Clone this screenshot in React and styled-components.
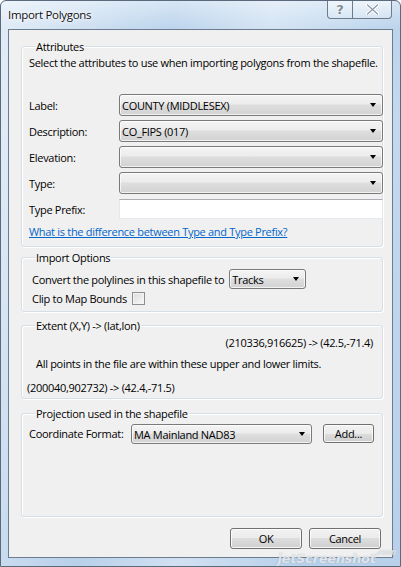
import React, { useState } from "react";
import styled, { createGlobalStyle } from "styled-components";

const Global = createGlobalStyle`
  html, body { margin: 0; padding: 0; background: #ffffff; }
  body {
    font-family: "Open Sans", "Noto Sans", sans-serif;
    font-size: 11px;
    letter-spacing: -0.3px;
    color: #000;
  }
  * { box-sizing: border-box; }
`;

const Combo = ({ value, width }) => (
  <ComboBox $width={width}>
    <ComboText>{value}</ComboText>
    <Arrow />
  </ComboBox>
);

const App = () => {
  const [clip, setClip] = useState(false);

  return (
    <>
      <Global />
      <Window>
        <TitleBar>
          <Title>Import Polygons</Title>
          <Caption>
            <CapButton $w={26}>?</CapButton>
            <CapButton $w={40}>
              <svg width="13" height="11" viewBox="0 0 13 11">
                <path d="M1.5 1 L11.5 10 M11.5 1 L1.5 10" stroke="#fff" strokeWidth="3.2" strokeLinecap="round" />
                <path d="M1.5 1 L11.5 10 M11.5 1 L1.5 10" stroke="#8c98a6" strokeWidth="1.2" strokeLinecap="round" />
              </svg>
            </CapButton>
          </Caption>
        </TitleBar>

        <Client>
          <Group>
            <Legend>Attributes</Legend>
            <Note>Select the attributes to use when importing polygons from the shapefile.</Note>
            <Form>
              <FieldLabel>Label:</FieldLabel>
              <Combo value="COUNTY (MIDDLESEX)" />
              <FieldLabel>Description:</FieldLabel>
              <Combo value="CO_FIPS (017)" />
              <FieldLabel>Elevation:</FieldLabel>
              <Combo value="" />
              <FieldLabel>Type:</FieldLabel>
              <Combo value="" />
              <FieldLabel $input>Type Prefix:</FieldLabel>
              <TextInput />
            </Form>
            <HelpLink href="#">What is the difference between Type and Type Prefix?</HelpLink>
          </Group>

          <Group $mt={3} $pb={5}>
            <Legend>Import Options</Legend>
            <OptionRow $top={4}>
              Convert the polylines in this shapefile to
              <Combo value="Tracks" width={77} />
            </OptionRow>
            <OptionRow $top={2}>
              Clip to Map Bounds
              <Check $on={clip} onClick={() => setClip(!clip)} />
            </OptionRow>
          </Group>

          <Group $mt={6} $pb={3}>
            <Legend>Extent (X,Y) -&gt; (lat,lon)</Legend>
            <ExtentLine $align="right" $top={2}>(210336,916625) -&gt; (42.5,-71.4)</ExtentLine>
            <ExtentLine $indent={7} $top={6}>All points in the file are within these upper and lower limits.</ExtentLine>
            <ExtentLine $indent={-2} $top={9}>(200040,902732) -&gt; (42.4,-71.5)</ExtentLine>
          </Group>

          <Group $mt={7} $grow>
            <Legend>Projection used in the shapefile</Legend>
            <ProjRow>
              <ProjLabel>Coordinate Format:</ProjLabel>
              <Combo value="MA Mainland NAD83" width={181} />
              <Button $w={51} $h={19}>Add...</Button>
            </ProjRow>
          </Group>

          <ButtonBar>
            <Button $w={72}>OK</Button>
            <Button $w={72}>Cancel</Button>
          </ButtonBar>
        </Client>

        <Watermark>
          jetScreenshot<small>.com</small>
        </Watermark>
      </Window>
    </>
  );
};

export default App;

const Window = styled.div`
  position: relative;
  width: 401px;
  height: 567px;
  display: flex;
  flex-direction: column;
  padding: 0 7px 8px 7px;
  border: 1px solid #5a6a7c;
  border-radius: 6px 6px 0 0;
  background:
    linear-gradient(100deg, rgba(255,255,255,0.55) 0%, rgba(255,255,255,0) 35%, rgba(255,255,255,0.35) 55%, rgba(255,255,255,0) 80%),
    linear-gradient(to bottom, #d7e6f5 0px, #bcd4ec 28px, #c4d9ee 120px, #b8d0ea 100%);
  overflow: hidden;
`;

const TitleBar = styled.div`
  height: 28px;
  display: flex;
  align-items: flex-start;
  justify-content: space-between;
  margin-right: 1px;
`;

const Title = styled.div`
  padding: 6px 0 0 0;
  font-size: 11.5px;
  line-height: 16px;
  color: #111;
  text-shadow: 0 0 6px #fff, 0 0 3px #fff;
`;

const Caption = styled.div`
  display: flex;
  margin-top: -1px;
`;

const CapButton = styled.div`
  width: ${(p) => p.$w}px;
  height: 19px;
  display: flex;
  align-items: center;
  justify-content: center;
  border: 1px solid #6d7c8d;
  border-top: none;
  margin-left: -1px;
  background: linear-gradient(to bottom, rgba(255,255,255,0.55), rgba(225,236,247,0.5));
  color: #7f8b98;
  font-family: "DejaVu Sans", sans-serif;
  font-size: 13px;
  font-weight: bold;
  letter-spacing: 0;
  text-shadow: 0 0 2px #fff, 0 0 2px #fff;
  &:first-child { border-bottom-left-radius: 4px; }
  &:last-child { border-bottom-right-radius: 4px; }
`;

const Client = styled.div`
  flex: 1;
  display: flex;
  flex-direction: column;
  background: #f0f0f0;
  border: 1px solid #6b7c8e;
  padding: 9px 9px 8px 12px;
  white-space: nowrap;
`;

const Group = styled.fieldset`
  margin: ${(p) => p.$mt || 0}px 0 0 0;
  padding: 0 0 ${(p) => (p.$pb === undefined ? 7 : p.$pb)}px 7px;
  border: 1px solid #d5dfe5;
  border-radius: 3px;
  box-shadow: inset 1px 1px 0 #ffffff, 1px 1px 0 #ffffff;
  min-width: 0;
  ${(p) => (p.$grow ? "flex: 1;" : "")}
`;

const Legend = styled.legend`
  padding: 0 1px;
  margin-left: 6px;
  line-height: 15px;
  color: #000;
`;

const Note = styled.div`
  margin-top: 1px;
  line-height: 15px;
`;

const Form = styled.div`
  margin-top: 24px;
  display: grid;
  grid-template-columns: 90px 1fr;
  row-gap: 4px;
  align-items: center;
`;

const FieldLabel = styled.div`
  line-height: 15px;
  ${(p) => (p.$input ? "margin-top: 1px;" : "")}
`;

const ComboBox = styled.div`
  height: ${(p) => (p.$width ? 20 : 22)}px;
  width: ${(p) => (p.$width ? `${p.$width}px` : "auto")};
  flex-shrink: 0;
  display: flex;
  align-items: center;
  padding: 0 6px 0 2px;
  margin-right: -1px;
  border: 1px solid #7a7a7a;
  border-radius: 3px;
  background: linear-gradient(to bottom, #f4f4f4 0%, #ececec 45%, #dedede 50%, #d2d2d2 100%);
  box-shadow: inset 0 0 0 1px rgba(255,255,255,0.7);
`;

const ComboText = styled.span`
  flex: 1;
  overflow: hidden;
`;

const Arrow = styled.span`
  width: 0;
  height: 0;
  border-left: 3.5px solid transparent;
  border-right: 3.5px solid transparent;
  border-top: 4px solid #000;
`;

const TextInput = styled.div`
  height: 20px;
  margin-top: 1px;
  margin-right: -1px;
  background: #ffffff;
  border: 1px solid #e3e9ef;
  border-top-color: #abadb3;
`;

const HelpLink = styled.a`
  display: block;
  margin-top: 5px;
  line-height: 15px;
  color: #0066cc;
  text-decoration: underline;
`;

const OptionRow = styled.div`
  margin-top: ${(p) => p.$top}px;
  margin-left: 3px;
  display: flex;
  align-items: center;
  gap: 5px;
  line-height: 15px;
`;

const Check = styled.span`
  width: 13px;
  height: 13px;
  border: 1px solid #8f8f8f;
  background: linear-gradient(135deg, #dcdcdc, #f8f8f8);
  box-shadow: inset 0 0 0 1px #f4f4f4;
  cursor: pointer;
`;

const ExtentLine = styled.div`
  margin-top: ${(p) => p.$top}px;
  margin-left: ${(p) => p.$indent || 0}px;
  padding-right: 9px;
  text-align: ${(p) => p.$align || "left"};
  line-height: 15px;
`;

const ProjRow = styled.div`
  margin-top: 3px;
  display: flex;
  align-items: flex-start;
`;

const ProjLabel = styled.div`
  width: 102px;
  flex-shrink: 0;
  line-height: 20px;
`;

const Button = styled.div`
  width: ${(p) => p.$w}px;
  height: ${(p) => p.$h || 21}px;
  margin-left: ${(p) => (p.$h ? 12 : 0)}px;
  flex-shrink: 0;
  display: flex;
  align-items: center;
  justify-content: center;
  border: 1px solid #707070;
  border-radius: 3px;
  background: linear-gradient(to bottom, #f2f2f2 0%, #ebebeb 50%, #dddddd 50%, #cfcfcf 100%);
  box-shadow: inset 0 0 0 1px rgba(255,255,255,0.8);
`;

const ButtonBar = styled.div`
  margin: 11px 2px 0 0;
  display: flex;
  justify-content: flex-end;
  gap: 7px;
`;

const Watermark = styled.div`
  position: absolute;
  right: 4px;
  bottom: 0px;
  font-family: "DejaVu Sans", sans-serif;
  font-style: italic;
  font-weight: bold;
  font-size: 13px;
  letter-spacing: -0.3px;
  color: rgba(255,255,255,0.75);
  text-shadow: 0 0 1px rgba(90,110,130,0.6);
  pointer-events: none;
  small { font-size: 8px; vertical-align: 8px; }
`;
